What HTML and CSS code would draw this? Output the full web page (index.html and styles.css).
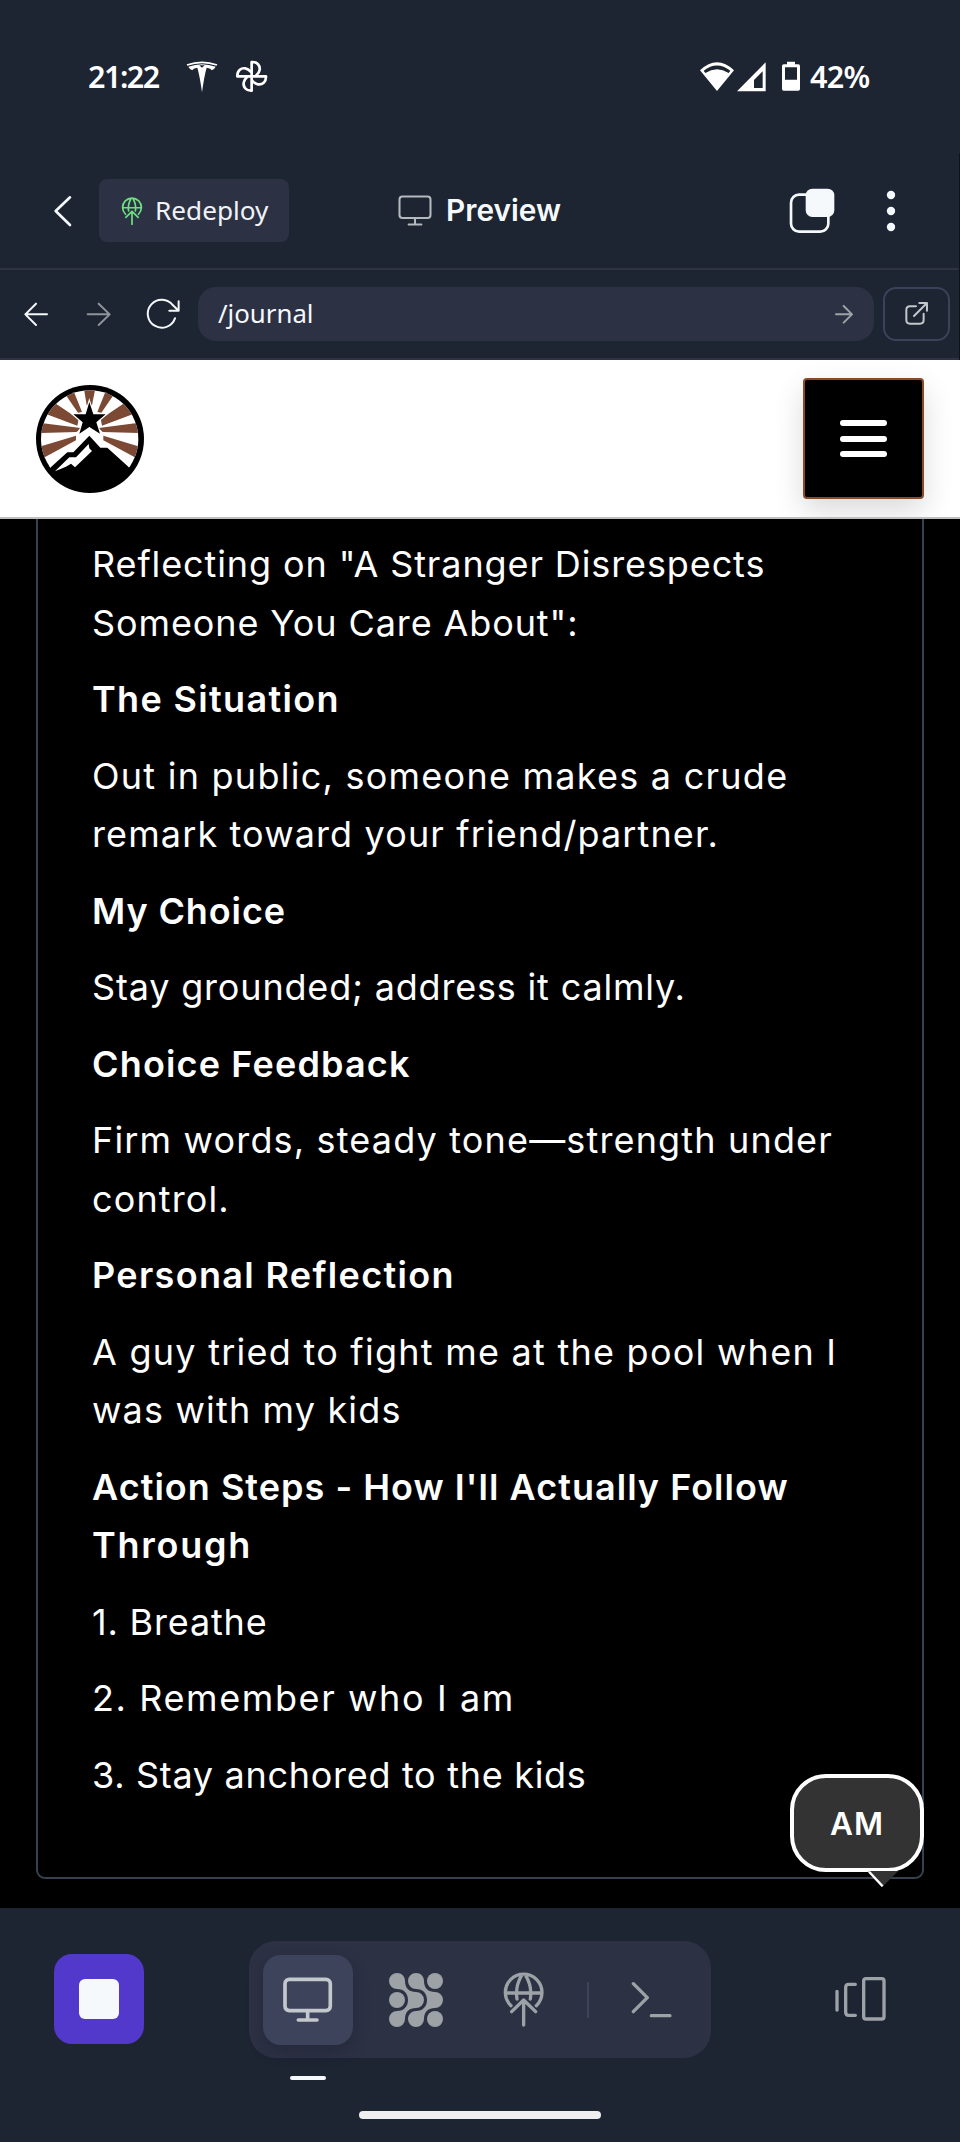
FILE: index.html
```html
<!DOCTYPE html>
<html lang="en">
<head>
<meta charset="utf-8">
<title>Preview</title>
<link rel="stylesheet" href="styles.css">
</head>
<body>
<div class="screen">
  <header class="chrome">
    <div class="status">
      <span class="time">21:22</span>
      <svg class="s-brand" viewBox="558 94 96 96"><path fill="#fff" d="M560 104Q606 87 652 104L650 108Q606 93 562 108ZM565 111Q606 96 647 111Q643 119 635 122Q633 116 620 114Q613 137 606 188Q599 137 592 114Q579 116 577 122Q569 119 565 111ZM598 107L606 114L614 107Z" fill-rule="evenodd"/></svg>
      <svg class="s-fan" viewBox="706 94 100 98"><g fill="none" stroke="#fff" stroke-width="8" stroke-linejoin="round" stroke-linecap="round"><path d="M756 143V100C773 99 782 111 780 124C779 131 776 135 770 140"/><path d="M756 143V100C773 99 782 111 780 124C779 131 776 135 770 140" transform="rotate(90 756 143)"/><path d="M756 143V100C773 99 782 111 780 124C779 131 776 135 770 140" transform="rotate(180 756 143)"/><path d="M756 143V100C773 99 782 111 780 124C779 131 776 135 770 140" transform="rotate(270 756 143)"/></g></svg>
      <svg class="s-net" viewBox="660 94 300 92"><path fill="#fff" fill-rule="evenodd" d="M660 122Q711 74 762 122L711 184ZM671 123L676 130Q711 108 746 130L751 123Q711 92 671 123Z"/><path fill="#fff" fill-rule="evenodd" d="M771 185L857 98V185ZM822 175H848V125L822 151Z"/><path fill="#fff" fill-rule="evenodd" d="M921 96H945V104H955Q960 104 960 109V178Q960 183 955 183H911Q906 183 906 178V109Q906 104 911 104H921ZM915 113V150H951V113Z"/></svg>
      <span class="batt">42%</span>
    </div>
    <div class="toolbar">
      <svg class="t-back" viewBox="160 492 60 102"><path d="M211 502L168 543L211 585" fill="none" stroke="#f5f9fc" stroke-width="8" stroke-linecap="round" stroke-linejoin="round"/></svg>
      <button class="redeploy"><svg class="globe-sm" viewBox="70 153 124 164"><g class="globe-lines"><path d="M94 254A55 55 0 1 1 170 254M77 216H187M126 163Q106 196 112 234M138 163Q158 196 152 234M132 312V239M96 272L132 237L168 272"/></g></svg><span>Redeploy</span></button>
      <div class="title"><svg class="mon-sm" viewBox="850 169 148 136"><g class="mon-lines"><rect x="856" y="176" width="136" height="94" rx="13"/><path d="M924 270V298M896 298H952"/></g></svg><span>Preview</span></div>
      <svg class="t-tabs" viewBox="926 470 140 142"><rect x="932" y="493" width="112" height="111" rx="24" fill="none" stroke="#f5f9fc" stroke-width="8"/><rect x="976" y="475" width="86" height="85" rx="20" fill="#f5f9fc"/></svg>
      <svg class="t-more" viewBox="1218 480 30 126"><g fill="#f5f9fc"><circle cx="1233" cy="495" r="12.5"/><circle cx="1233" cy="543" r="12.5"/><circle cx="1233" cy="591" r="12.5"/></g></svg>
    </div>
    <div class="address">
      <svg class="a-back" viewBox="70 812 78 80"><path d="M142 852H77M109 820L77 852L109 884"/></svg>
      <svg class="a-fwd" viewBox="258 812 78 80"><path d="M263 852H328M296 820L329 852L296 884"/></svg>
      <svg class="a-reload" viewBox="438 802 106 100"><path d="M525 866A42 42 0 1 1 519 827L536 843M536 815V843H508"/></svg>
      <div class="url"><span>/journal</span><svg viewBox="1064 822 60 60"><path d="M1070 853H1117M1093 828L1118 853L1093 878"/></svg></div>
      <button class="ext"><svg viewBox="1272 816 76 76"><path d="M1308 832H1290Q1279 832 1279 843V873Q1279 884 1290 884H1320Q1331 884 1331 873V854M1302 861L1341 822M1318 822H1341V845"/></svg></button>
    </div>
  </header>

  <main class="site">
    <div class="site-head">
      <svg class="logo" viewBox="18 15 324 324">
        <circle cx="180" cy="177" r="162" fill="#000"/>
        <clipPath id="disc"><circle cx="179" cy="177" r="146"/></clipPath>
        <g clip-path="url(#disc)">
          <rect width="360" height="264" fill="#fff"/>
          <g fill="#7c4a34">
            <path d="M161 20H197L186 76H170ZM97 30L128 26L156 96L144 98ZM261 30L230 26L202 96L214 98ZM48 102L70 66L146 117L142 137ZM310 102L288 66L212 117L216 137ZM20 127L20 159L140 156L152 144ZM338 127L338 159L218 156L206 144ZM20 203L30 239L138 181V167ZM338 203L328 239L220 181V167Z"/>
          </g>
          <path d="M178 66L190 103H227L199 127L210 161L178 141L148 161L158 127L130 103H167Z" fill="#000" stroke="#fff" stroke-width="7" paint-order="stroke"/>
          <path d="M178 142L230 192L310 264H50L132 188Z" fill="#fff"/>
          <path d="M40 282L112 217H130L178 167L211 203H232L300 265L350 310V360H0V300Z" fill="#000"/>
          <path d="M75 274L118 232H138L176 192L178 205L186 213L135 262L123 251L108 260Z" fill="#fff"/>
        </g>
      </svg>
      <button class="menu"><i></i><i></i><i></i></button>
    </div>
    <article class="card">
      <p><span class="k1">Reflecting on "A Stranger Disrespects</span><span class="k1">Someone You Care About":</span></p>
      <h3 class="k6">The Situation</h3>
      <p><span class="k5">Out in public, someone makes a crude</span><span class="k3">remark toward your friend/partner.</span></p>
      <h3 class="k1">My Choice</h3>
      <p class="k0">Stay grounded; address it calmly.</p>
      <h3 class="k4">Choice Feedback</h3>
      <p><span class="k4">Firm words, steady tone—strength under</span><span class="k3">control.</span></p>
      <h3 class="k6">Personal Reflection</h3>
      <p><span class="k5">A guy tried to fight me at the pool when I</span><span class="k4">was with my kids</span></p>
      <h3><span class="k2">Action Steps - How I'll Actually Follow</span><span class="k8">Through</span></h3>
      <p class="k0">1. Breathe</p>
      <p class="k7">2. Remember who I am</p>
      <p class="k9">3. Stay anchored to the kids</p>
    </article>
    <div class="bubble">AM<svg viewBox="380 392 94 50"><path d="M384 392H474L428 438Z" fill="#333"/><path d="M386 394L427 438" stroke="#fff" stroke-width="7"/></svg></div>
  </main>

  <footer class="dock">
    <button class="stop"><i></i></button>
    <nav class="tabs">
      <span class="tab on"><svg class="mon" viewBox="850 169 148 136"><g class="mon-lines"><rect x="856" y="176" width="136" height="94" rx="13"/><path d="M924 270V298M896 298H952"/></g></svg></span>
      <span class="tab"><svg class="agent" viewBox="1167 156 162 162"><g fill="#9da2a6"><circle cx="1191" cy="237" r="24"/><circle cx="1305" cy="180" r="24"/><circle cx="1305" cy="294" r="24"/>
        <path d="M1191 156C1205 156 1215 166 1215 180C1215 202 1228 213 1248 213A24 24 0 0 1 1248 261C1228 261 1215 272 1215 294A24 24 0 1 1 1191 270C1212 270 1224 256 1224 237C1224 218 1212 204 1191 204A24 24 0 0 1 1191 156Z"/>
        <path d="M1248 156C1262 156 1272 166 1272 180C1272 202 1285 213 1305 213A24 24 0 0 1 1305 261C1285 261 1272 272 1272 294A24 24 0 1 1 1248 270C1269 270 1281 256 1281 237C1281 218 1269 204 1248 204A24 24 0 0 1 1248 156Z"/></g></svg></span>
      <span class="tab"><svg class="globe" viewBox="70 153 124 164"><g class="globe-lines"><path d="M94 254A55 55 0 1 1 170 254M77 216H187M126 163Q106 196 112 234M138 163Q158 196 152 234M132 312V239M96 272L132 237L168 272"/></g></svg></span>
      <i class="sep"></i>
      <span class="tab"><svg class="term" viewBox="454 180 124 112"><path d="M461 188L503 230L461 272M515 284H571"/></svg></span>
    </nav>
    <svg class="switch" viewBox="1064 168 158 138"><path d="M1073 214V270M1128 193H1108Q1099 193 1099 202V277Q1099 286 1108 286H1128"/><rect x="1153" y="176" width="61" height="121" rx="7"/></svg>
    <i class="marker"></i>
    <i class="home"></i>
  </footer>
  <i class="edge"></i>
</div>
</body>
</html>
```
FILE: styles.css
```css
*{box-sizing:border-box}
body{margin:0;background:#1d2432}
button{font:inherit;color:inherit;border:0;padding:0;margin:0;background:none}
svg,i{display:block;flex:none}
.screen{position:relative;width:960px;height:2142px;display:flex;flex-direction:column;background:#1d2432;color:#f5f9fc;overflow:hidden}
.chrome{height:360px;flex:none;display:flex;flex-direction:column}

.status{height:153px;display:flex;align-items:center;padding:0 82px 0 88px;color:#fff;font:600 30.5px/40px "Noto Sans",sans-serif}
.time{width:98px;letter-spacing:-1.5px;padding-bottom:2px}
.s-brand{width:32px;height:32px}
.s-fan{width:33.3px;height:32.7px;margin-left:17.3px}
.s-net{width:100px;height:30.7px;margin-left:auto}
.batt{width:78px;padding:0 8px 2px 10px;letter-spacing:-.7px;white-space:nowrap}

.toolbar{height:117px;display:flex;align-items:center;padding:0 64px 0 53px;border-bottom:2px solid #2d3245}
.t-back{width:20px;height:34px}
.redeploy{width:190px;height:63px;margin-left:26px;border-radius:8px;background:#2d3144;display:flex;align-items:center;padding-left:22px;gap:12px;font:400 26.2px "Noto Sans",sans-serif;color:#f0f3f6}
.redeploy span,.title span,.url span{padding-bottom:2px}
.globe-sm{width:22px;height:28px}
.globe-lines{fill:none;stroke:#9da2a6;stroke-width:10;stroke-linecap:round;stroke-linejoin:round}
.globe-sm .globe-lines{stroke:#6be07f}
.title{margin-left:109px;display:flex;align-items:center;gap:14px;font:600 29.8px Inter,sans-serif}
.mon-lines{fill:none;stroke:#c2c8cc;stroke-width:11;stroke-linecap:round}
.mon-sm{width:34px;height:31px}
.mon-sm .mon-lines{stroke:#b4b9bd;stroke-width:9}
.t-tabs{width:46.7px;height:47.3px;margin-left:auto}
.t-more{width:10px;height:42px;margin-left:50.8px}

.address{height:90px;border-bottom:2px solid #2d3245;display:flex;align-items:center;padding:0 10px 0 23px}
.address svg{fill:none;stroke:#f5f9fc;stroke-width:6;stroke-linecap:round;stroke-linejoin:round}
.address .a-back{width:26px;height:26.7px}
.address .a-fwd{width:26px;height:26.7px;margin-left:37px;stroke:#8f9499}
.address .a-reload{width:35.3px;height:33.3px;margin-left:34px}
.url{width:676px;height:54px;margin-left:16.7px;border-radius:18px;background:#2d3144;display:flex;align-items:center;justify-content:space-between;padding:0 20px 0 20px;font:400 25.8px "Noto Sans",sans-serif}
.address .url svg{width:20px;height:20px;stroke:#9da2a6}
.ext{width:67px;height:54px;margin-left:auto;border:2px solid #3b425a;border-radius:13px;display:flex;align-items:center;justify-content:center}
.address .ext svg{width:25.3px;height:25.3px;stroke:#c2c8cc}

.site{position:relative;height:1548px;flex:none;background:#000;display:flex;flex-direction:column}
.site-head{height:159px;flex:none;background:#fff;border-bottom:2px solid #bfbfbf;display:flex;align-items:center;justify-content:space-between;padding:0 36px;overflow:hidden}
.logo{width:108px;height:108px;margin-top:1px}
.menu{width:121px;height:121px;background:#000;border:2px solid #8b4a26;border-radius:4px;display:flex;flex-direction:column;align-items:center;justify-content:center;gap:9.8px;box-shadow:0 12px 30px rgba(0,0,0,.15)}
.menu i{width:47.5px;height:6px;border-radius:3px;background:#fff}
.card{height:1360px;margin:0 36px;border:2px solid #36414f;border-top:0;border-radius:0 0 9px 9px;padding:16px 54px 0;color:#fff;font:400 36px/58.5px Inter,sans-serif}
.card p,.card h3{margin:0 0 18px;font-size:inherit;white-space:nowrap}
.card h3{font-weight:600}
.card span{display:block}
.k0{letter-spacing:.82px}
.k1{letter-spacing:.89px}
.k2{letter-spacing:1.02px}
.k3{letter-spacing:1.12px}
.k4{letter-spacing:1.16px}
.k5{letter-spacing:1.25px}
.k6{letter-spacing:1.34px}
.k7{letter-spacing:1.6px}
.k8{letter-spacing:1.75px}
.k9{letter-spacing:.7px}
.bubble{position:absolute;right:36px;bottom:36px;width:134px;height:98px;border:4px solid #fff;border-radius:36px;background:#333;color:#fff;display:flex;align-items:center;justify-content:center;font:600 31.5px Inter,sans-serif;letter-spacing:1px}
.bubble svg{position:absolute;left:72.7px;top:92.7px;width:31.3px;height:16.7px}

.dock{position:relative;height:234px;flex:none;display:flex;align-items:flex-start;padding:33px 73px 0 54px}
.stop{width:90px;height:90px;margin-top:13px;border-radius:18px;background:#5238cb;display:flex;align-items:center;justify-content:center}
.stop i{width:40px;height:40px;border-radius:6px;background:#f5f9fc}
.tabs{width:462px;height:117px;margin-left:105px;border-radius:27px;background:#2d3144;display:flex;align-items:center;padding-left:14px}
.tab{flex:none;width:90px;height:90px;border-radius:18px;display:flex;align-items:center;justify-content:center;margin-right:18px}
.tab:last-child{margin-right:0}
.tab.on{background:#3c435b;box-shadow:0 6px 16px rgba(20,24,38,.3)}
.mon{width:49.3px;height:45.3px}
.agent{width:54px;height:54px}
.globe{width:41.3px;height:54.7px}
.sep{width:2px;height:36px;background:#3c435b;margin-right:18px}
.term{width:41.3px;height:37.3px;fill:none;stroke:#9da2a6;stroke-width:10;stroke-linecap:round;stroke-linejoin:round}
.switch{width:52.7px;height:46px;margin:35px 0 0 auto;fill:none;stroke:#9da2a6;stroke-width:10;stroke-linecap:round}
.marker{position:absolute;left:290px;top:168px;width:36px;height:4px;border-radius:2px;background:#f5f9fc}
.home{position:absolute;left:359px;top:203px;width:242px;height:8px;border-radius:4px;background:#eceef0}
.edge{position:absolute;right:0;top:153px;width:1px;height:207px;background:#0e121c}
```
